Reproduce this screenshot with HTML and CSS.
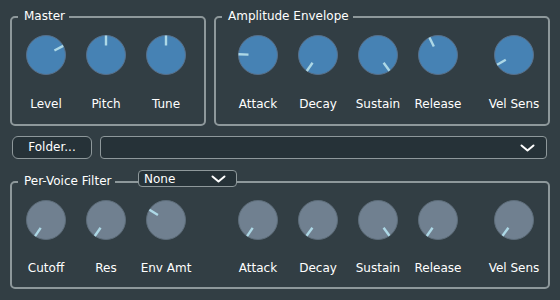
FILE: index.html
```html
<!DOCTYPE html>
<html>
<head>
<meta charset="utf-8">
<link rel="stylesheet" href="styles.css">
</head>
<body>
<div class="app">
  <div class="top-row">
    <section class="group group-master">
      <span class="group-title">Master</span>
      <div class="knobs">
        <div class="knob-cell"><svg class="knob knob-blue" viewBox="-20 -20 40 40"><circle r="19.5"/><line x1="0" y1="-9.5" x2="0" y2="-19.5" transform="rotate(62)"/></svg><span class="knob-label">Level</span></div>
        <div class="knob-cell"><svg class="knob knob-blue" viewBox="-20 -20 40 40"><circle r="19.5"/><line x1="0" y1="-9.5" x2="0" y2="-19.5" transform="rotate(0)"/></svg><span class="knob-label">Pitch</span></div>
        <div class="knob-cell"><svg class="knob knob-blue" viewBox="-20 -20 40 40"><circle r="19.5"/><line x1="0" y1="-9.5" x2="0" y2="-19.5" transform="rotate(0)"/></svg><span class="knob-label">Tune</span></div>
      </div>
    </section>
    <section class="group group-amp">
      <span class="group-title">Amplitude Envelope</span>
      <div class="knobs knobs-amp">
        <div class="knob-cell"><svg class="knob knob-blue" viewBox="-20 -20 40 40"><circle r="19.5"/><line x1="0" y1="-9.5" x2="0" y2="-19.5" transform="rotate(-88)"/></svg><span class="knob-label">Attack</span></div>
        <div class="knob-cell"><svg class="knob knob-blue" viewBox="-20 -20 40 40"><circle r="19.5"/><line x1="0" y1="-9.5" x2="0" y2="-19.5" transform="rotate(-145)"/></svg><span class="knob-label">Decay</span></div>
        <div class="knob-cell"><svg class="knob knob-blue" viewBox="-20 -20 40 40"><circle r="19.5"/><line x1="0" y1="-9.5" x2="0" y2="-19.5" transform="rotate(144)"/></svg><span class="knob-label">Sustain</span></div>
        <div class="knob-cell"><svg class="knob knob-blue" viewBox="-20 -20 40 40"><circle r="19.5"/><line x1="0" y1="-9.5" x2="0" y2="-19.5" transform="rotate(-26)"/></svg><span class="knob-label">Release</span></div>
        <div class="knob-cell sep-small"><svg class="knob knob-blue" viewBox="-20 -20 40 40"><circle r="19.5"/><line x1="0" y1="-9.5" x2="0" y2="-19.5" transform="rotate(-120)"/></svg><span class="knob-label">Vel Sens</span></div>
      </div>
    </section>
  </div>

  <div class="file-row">
    <button class="btn">Folder...</button>
    <div class="combo combo-wide">
      <span class="combo-text"></span>
      <svg class="chevron" viewBox="0 0 15 8"><polyline points="1.5,1.5 7.5,6.5 13.5,1.5"/></svg>
    </div>
  </div>

  <section class="group group-filter">
    <span class="group-title">Per-Voice Filter</span>
    <div class="combo combo-filter">
      <span class="combo-text">None</span>
      <svg class="chevron" viewBox="0 0 15 8"><polyline points="1.5,1.5 7.5,6.5 13.5,1.5"/></svg>
    </div>
    <div class="knobs knobs-filter">
      <div class="knob-cell"><svg class="knob knob-gray" viewBox="-20 -20 40 40"><circle r="19.5"/><line x1="0" y1="-9.5" x2="0" y2="-19.5" transform="rotate(-146)"/></svg><span class="knob-label">Cutoff</span></div>
      <div class="knob-cell"><svg class="knob knob-gray" viewBox="-20 -20 40 40"><circle r="19.5"/><line x1="0" y1="-9.5" x2="0" y2="-19.5" transform="rotate(-145)"/></svg><span class="knob-label">Res</span></div>
      <div class="knob-cell"><svg class="knob knob-gray" viewBox="-20 -20 40 40"><circle r="19.5"/><line x1="0" y1="-9.5" x2="0" y2="-19.5" transform="rotate(-58)"/></svg><span class="knob-label">Env Amt</span></div>
      <div class="knob-cell sep-large"><svg class="knob knob-gray" viewBox="-20 -20 40 40"><circle r="19.5"/><line x1="0" y1="-9.5" x2="0" y2="-19.5" transform="rotate(-146)"/></svg><span class="knob-label">Attack</span></div>
      <div class="knob-cell"><svg class="knob knob-gray" viewBox="-20 -20 40 40"><circle r="19.5"/><line x1="0" y1="-9.5" x2="0" y2="-19.5" transform="rotate(-144)"/></svg><span class="knob-label">Decay</span></div>
      <div class="knob-cell"><svg class="knob knob-gray" viewBox="-20 -20 40 40"><circle r="19.5"/><line x1="0" y1="-9.5" x2="0" y2="-19.5" transform="rotate(144)"/></svg><span class="knob-label">Sustain</span></div>
      <div class="knob-cell"><svg class="knob knob-gray" viewBox="-20 -20 40 40"><circle r="19.5"/><line x1="0" y1="-9.5" x2="0" y2="-19.5" transform="rotate(-145)"/></svg><span class="knob-label">Release</span></div>
      <div class="knob-cell sep-small"><svg class="knob knob-gray" viewBox="-20 -20 40 40"><circle r="19.5"/><line x1="0" y1="-9.5" x2="0" y2="-19.5" transform="rotate(-144)"/></svg><span class="knob-label">Vel Sens</span></div>
    </div>
  </section>
</div>
</body>
</html>
```

FILE: styles.css
```css
html, body {
  margin: 0;
  padding: 0;
}

body {
  width: 560px;
  height: 300px;
  overflow: hidden;
  background: #323e44;
  color: #ffffff;
  font-family: "DejaVu Sans", sans-serif;
  font-size: 12px;
}

.app {
  padding: 16px 10px 0 10px;
}

.top-row {
  display: flex;
  gap: 8px;
}

.group {
  position: relative;
  box-sizing: border-box;
  border: 2px solid #8e989b;
  border-radius: 5px;
}

.group-master {
  width: 196px;
}

.group-amp {
  width: 336px;
}

.group-title {
  position: absolute;
  top: -9px;
  left: 6px;
  padding: 0 4px 0 6px;
  line-height: 14px;
  background: #323e44;
  white-space: nowrap;
}

.knobs {
  display: flex;
  padding: 17px 0 13px 4px;
}

.knobs-amp {
  padding-left: 12px;
}

.knobs-filter {
  padding-bottom: 12px;
}

.knob-cell {
  width: 60px;
  display: flex;
  flex-direction: column;
  align-items: center;
}

.sep-small {
  margin-left: 16px;
}

.sep-large {
  margin-left: 32px;
}

.knob {
  display: block;
  width: 40px;
  height: 40px;
}

.knob line {
  stroke: #add8e6;
  stroke-width: 2.4;
  stroke-linecap: butt;
}

.knob-blue circle {
  fill: #4682b4;
  stroke: #58708a;
  stroke-width: 1;
}

.knob-gray circle {
  fill: #708090;
  stroke: #5e6d7a;
  stroke-width: 1;
}

.knob-label {
  margin-top: 22px;
  line-height: 14px;
  white-space: nowrap;
}

.knobs-filter .knob-label {
  margin-top: 21px;
}

.file-row {
  display: flex;
  height: 23px;
  margin-top: 10px;
  padding-left: 2px;
}

.btn {
  box-sizing: border-box;
  width: 80px;
  height: 23px;
  margin: 0;
  padding: 0;
  border: 1px solid #8e989b;
  border-radius: 6px;
  background: #263238;
  color: #ffffff;
  font-family: "DejaVu Sans", sans-serif;
  font-size: 12px;
  line-height: 21px;
}

.combo {
  box-sizing: border-box;
  display: flex;
  align-items: center;
  border: 1px solid #8e989b;
  border-radius: 4px;
  background: #263238;
}

.combo-wide {
  flex: 1;
  margin-left: 8px;
  margin-right: 3px;
  padding-right: 11px;
}

.combo-text {
  flex: 1;
  line-height: 14px;
}

.combo-filter {
  position: absolute;
  top: -13px;
  left: 126px;
  width: 99px;
  height: 17px;
  padding: 0 10px 0 5px;
}

.chevron {
  display: block;
  width: 15px;
  height: 8px;
}

.chevron polyline {
  fill: none;
  stroke: #ffffff;
  stroke-width: 2;
  stroke-linecap: round;
  stroke-linejoin: round;
}

.group-filter {
  margin-top: 22px;
}
```
